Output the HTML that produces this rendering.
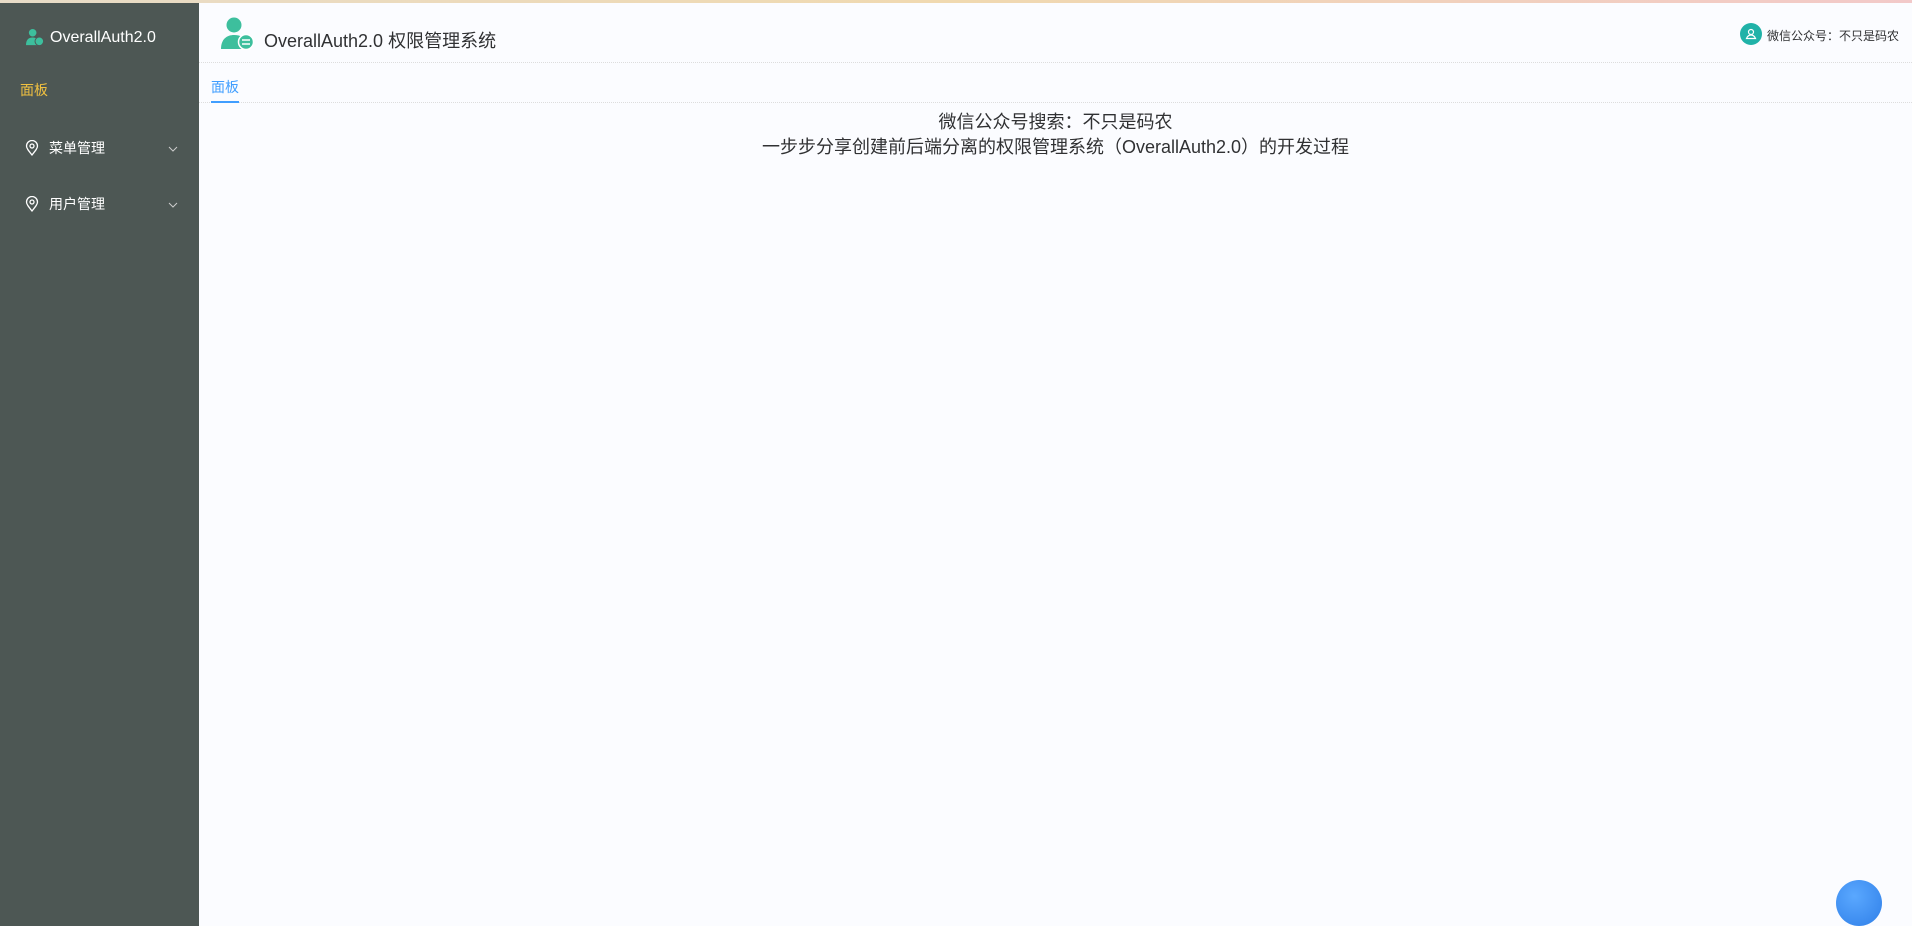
<!DOCTYPE html>
<html><head><meta charset="utf-8"><style>
*{margin:0;padding:0;box-sizing:border-box}
body{width:1912px;height:926px;overflow:hidden;background:#fbfcff;font-family:"Liberation Sans","Noto Sans CJK SC",sans-serif;position:relative}
.topline{position:absolute;left:0;top:0;width:1912px;height:3px;background:linear-gradient(90deg,#e8dcc8,#f0d9b0 50%,#f2c9c9)}
.side{position:absolute;left:0;top:3px;width:199px;height:923px;background:#4d5754}
.logo{position:absolute;left:26px;top:25px;color:#fff;font-size:16px;display:flex;align-items:center;gap:5px}
.mi{position:absolute;color:#fff;font-size:14px}
.hdr{position:absolute;left:199px;top:3px;right:0;height:60px;border-bottom:1px dotted #ddd}
.title{position:absolute;left:264px;top:27px;font-size:18px;color:#303133}
.tab{position:absolute;left:211px;top:77px;font-size:14px;color:#409eff}
.tabline{position:absolute;left:211px;top:101px;width:28px;height:2px;background:#409eff}
.tabb{position:absolute;left:199px;top:102px;right:0;border-bottom:1px dotted #ddd}
.c{position:absolute;left:199px;right:0;text-align:center;font-size:18px;color:#303133}
</style></head><body>
<div class="topline"></div>
<div class="side">
<div class="logo"><svg width="19" height="19" viewBox="0 0 20 20"><circle cx="7" cy="5" r="4" fill="#3dbf9d"/><path d="M0 18c0-6 3-8 7-8s6 2 6 4v4z" fill="#3dbf9d"/><circle cx="14" cy="14" r="4.5" fill="#3dbf9d" stroke="#4d5754"/></svg>OverallAuth2.0</div>
<div class="mi" style="left:20px;top:77px;color:#f0c040">面板</div>
<div class="mi" style="left:25px;top:135px"><svg width="14" height="16" viewBox="0 0 14 16" style="vertical-align:-3px;margin-right:10px"><path d="M7 15C3 10 1.5 8 1.5 6a5.5 5.5 0 0111 0c0 2-1.5 4-5.5 9z" fill="none" stroke="#fff" stroke-width="1.3"/><circle cx="7" cy="6" r="2" fill="none" stroke="#fff" stroke-width="1.3"/></svg>菜单管理</div>
<div class="mi" style="left:25px;top:191px"><svg width="14" height="16" viewBox="0 0 14 16" style="vertical-align:-3px;margin-right:10px"><path d="M7 15C3 10 1.5 8 1.5 6a5.5 5.5 0 0111 0c0 2-1.5 4-5.5 9z" fill="none" stroke="#fff" stroke-width="1.3"/><circle cx="7" cy="6" r="2" fill="none" stroke="#fff" stroke-width="1.3"/></svg>用户管理</div>
<svg style="position:absolute;left:168px;top:143px" width="10" height="6"><path d="M1 1l4 4 4-4" fill="none" stroke="#ccc"/></svg>
<svg style="position:absolute;left:168px;top:199px" width="10" height="6"><path d="M1 1l4 4 4-4" fill="none" stroke="#ccc"/></svg>
</div>
<div class="hdr"></div>
<svg style="position:absolute;left:220px;top:17px" width="34" height="34" viewBox="0 0 34 34"><circle cx="14" cy="8" r="7.5" fill="#3dbf9d"/><path d="M1 32c0-10 6-14 13-14s11 3 11 6v8z" fill="#3dbf9d"/><circle cx="26" cy="25" r="7.5" fill="#3dbf9d" stroke="#fff" stroke-width="1.5"/><path d="M22 23h8M22 27h8" stroke="#fff" stroke-width="1.5"/></svg>
<div class="title">OverallAuth2.0 权限管理系统</div>
<svg style="position:absolute;left:1740px;top:23px" width="22" height="22" viewBox="0 0 22 22"><circle cx="11" cy="11" r="11" fill="#20b2a8"/><circle cx="11" cy="9" r="2.5" fill="none" stroke="#fff" stroke-width="1.2"/><path d="M6.5 15.5c1-2.5 2.5-3.5 4.5-3.5s3.5 1 4.5 3.5z" fill="none" stroke="#fff" stroke-width="1.2"/></svg>
<div style="position:absolute;left:1767px;top:27px;font-size:12px;color:#303133">微信公众号：不只是码农</div>
<div class="tab">面板</div>
<div class="tabb"></div>
<div class="tabline"></div>
<div class="c" style="top:108px">微信公众号搜索：不只是码农</div>
<div class="c" style="top:133px">一步步分享创建前后端分离的权限管理系统（OverallAuth2.0）的开发过程</div>
<div style="position:absolute;left:1836px;top:880px;width:46px;height:46px;border-radius:50%;background:radial-gradient(circle at 40% 35%,#5aa8ff,#2f7fe8)"></div>
</body></html>
